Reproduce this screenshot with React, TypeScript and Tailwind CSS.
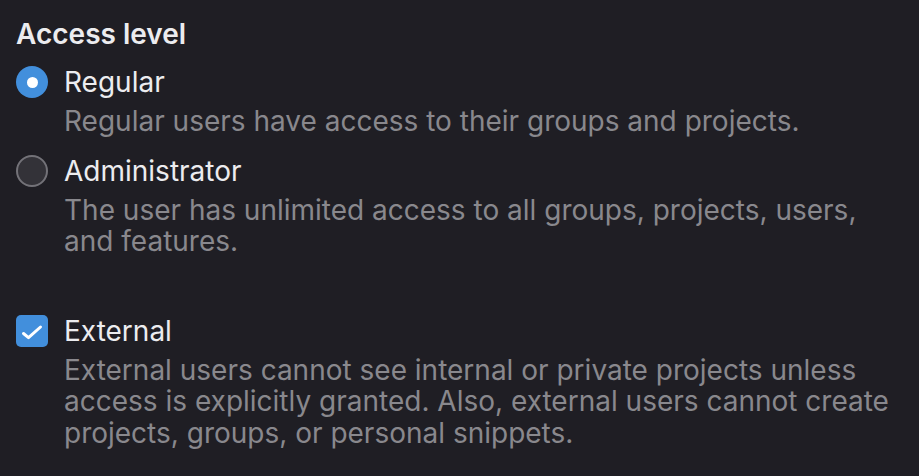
function Radio({ checked }: { checked?: boolean }) {
    if (checked) {
        return (
            <span className="flex h-8 w-8 shrink-0 items-center justify-center rounded-full bg-[#428fdc]">
                <span className="h-[11px] w-[11px] rounded-full bg-white" />
            </span>
        )
    }
    return <span className="block h-8 w-8 shrink-0 rounded-full border-2 border-[#737278] bg-[#333238]" />
}

function Checkbox() {
    return (
        <span className="block h-8 w-8 shrink-0 rounded-[5px] bg-[#428fdc]">
            <svg viewBox="0 0 32 32" className="h-8 w-8" fill="none">
                <path
                    d="M7.5 18.5l5 4.2L24.5 12"
                    stroke="white"
                    strokeWidth="3"
                    strokeLinecap="round"
                    strokeLinejoin="round"
                />
            </svg>
        </span>
    )
}

function Option({
    control,
    label,
    help,
}: {
    control: React.ReactNode
    label: string
    help: string
}) {
    return (
        <div className="flex gap-4">
            <div className="pt-[2px]">{control}</div>
            <div className="flex flex-col">
                <span className="text-[28px] leading-[36px] text-[#ececef]">{label}</span>
                <span className="mt-[6px] text-[28px] leading-[31.5px] text-[#89888d]">{help}</span>
            </div>
        </div>
    )
}

export default function App() {
    return (
        <div
            className="min-h-[476px] w-[919px] bg-[#1f1e24] pt-4 pr-4 pl-4"
            style={{ fontFamily: "Inter, 'Noto Sans', sans-serif" }}
        >
            <h2 className="text-[28px] leading-[36px] font-semibold text-[#ececef]">Access level</h2>
            <div className="mt-3 flex flex-col gap-[15px]">
                <Option
                    control={<Radio checked />}
                    label="Regular"
                    help="Regular users have access to their groups and projects."
                />
                <Option
                    control={<Radio />}
                    label="Administrator"
                    help="The user has unlimited access to all groups, projects, users, and features."
                />
            </div>
            <div className="mt-[55px]">
                <Option control={<Checkbox />} label="External" help="External users cannot see internal or private projects unless access is explicitly granted. Also, external users cannot create projects, groups, or personal snippets." />
            </div>
        </div>
    )
}
